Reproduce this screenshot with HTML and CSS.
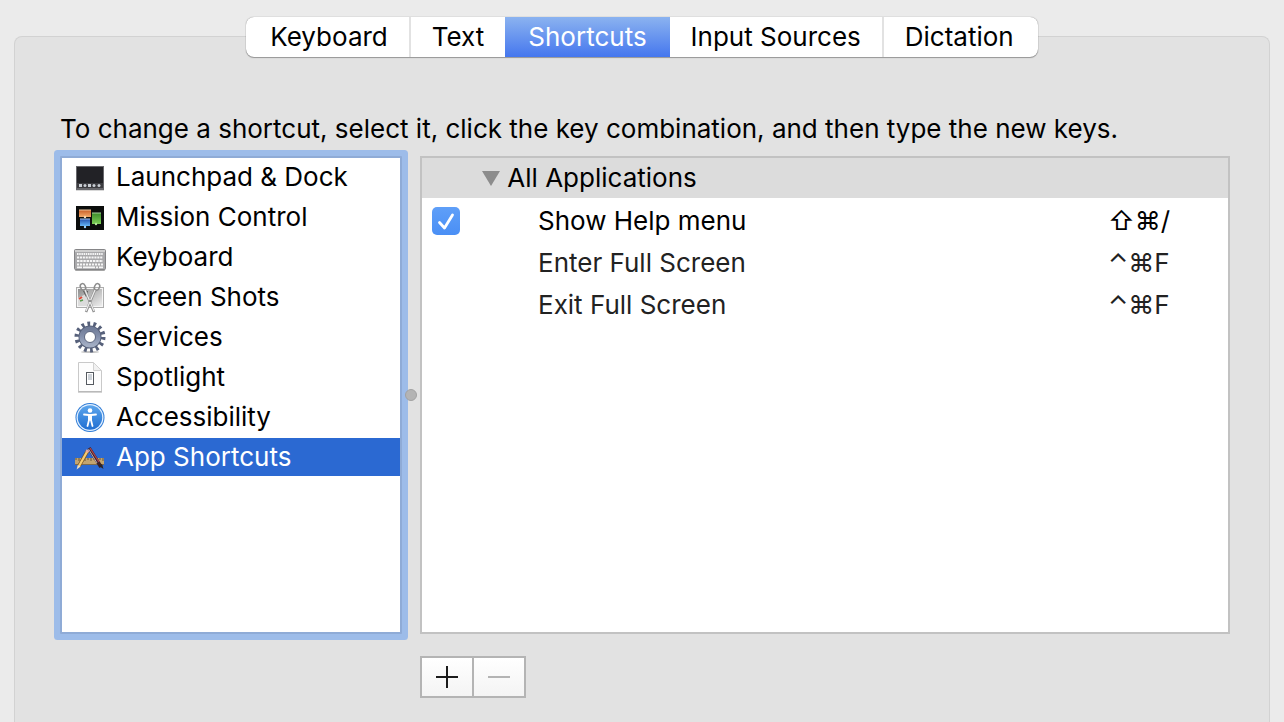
FILE: index.html
```html
<!DOCTYPE html>
<html lang="en">
<head>
    <meta charset="UTF-8">
    <meta name="viewport" content="width=device-width, initial-scale=1.0">
    <title>Keyboard</title>
    <link rel="stylesheet" href="styles.css">
</head>
<body>
    <!-- Tabs -->
    <div class="tabs" role="tablist">
        <button class="tab" role="tab">Keyboard</button>
        <button class="tab" role="tab">Text</button>
        <button class="tab active" role="tab" aria-selected="true">Shortcuts</button>
        <button class="tab" role="tab">Input Sources</button>
        <button class="tab" role="tab">Dictation</button>
    </div>

    <main class="panel">
        <p class="hint">To change a shortcut, select it, click the key combination, and then type the new keys.</p>

        <div class="panes">
            <!-- Categories -->
            <ul class="categories">
                <li><button class="category">
                    <svg class="icon" viewBox="0 0 32 32" aria-hidden="true">
                        <rect x="2" y="28" width="28" height="2" fill="#d8d8d8"/>
                        <rect x="2" y="5" width="28" height="24" fill="#68686c"/>
                        <rect x="3" y="6" width="26" height="17" fill="#222226"/>
                        <rect x="3" y="22" width="26" height="5" fill="#3c3c40"/>
                        <g fill="#c9ced4">
                            <rect x="5" y="23" width="3" height="3"/>
                            <circle cx="11" cy="24.500" r="1.500"/>
                            <rect x="14" y="23" width="3" height="3"/>
                            <circle cx="20" cy="24.500" r="1.500"/>
                            <circle cx="25" cy="24.500" r="1.500"/>
                        </g>
                    </svg>
                    Launchpad &amp; Dock
                </button></li>
                <li><button class="category">
                    <svg class="icon" viewBox="0 0 32 32" aria-hidden="true">
                        <defs>
                            <linearGradient id="mcOrange" x2="0" y2="1"><stop stop-color="#c85e28"/><stop offset="1" stop-color="#f3aa6a"/></linearGradient>
                            <linearGradient id="mcBlue" x2="0" y2="1"><stop stop-color="#2450a8"/><stop offset="1" stop-color="#64b4f4"/></linearGradient>
                            <linearGradient id="mcGreen" x2="0" y2="1"><stop stop-color="#3b8a2b"/><stop offset="1" stop-color="#7ed057"/></linearGradient>
                        </defs>
                        <rect x="2" y="5" width="28" height="24" fill="#0b0d0c"/>
                        <rect x="5" y="9" width="12" height="7" fill="url(#mcOrange)"/>
                        <path d="M5 9h12" stroke="#efc8a0"/>
                        <rect x="6" y="18" width="10" height="7" fill="url(#mcBlue)"/>
                        <path d="M6 18h10" stroke="#a8c4ec"/>
                        <rect x="18" y="12" width="9" height="11" fill="url(#mcGreen)"/>
                        <path d="M18 12h9" stroke="#a8d89c"/>
                        <circle cx="11" cy="16" r="1.200" fill="#f7d9b4"/>
                        <circle cx="11" cy="26" r="1.200" fill="#9bd0fa"/>
                        <circle cx="22" cy="23" r="1.200" fill="#b5e89a"/>
                    </svg>
                    Mission Control
                </button></li>
                <li><button class="category">
                    <svg class="icon" viewBox="0 0 32 32" aria-hidden="true">
                        <rect x="1" y="28" width="30" height="2" rx="1" fill="#a4a4a4"/>
                        <rect x="0.500" y="8.500" width="31" height="20" rx="1" fill="#a9a9ab" stroke="#858587"/>
                        <path d="M1 10h30" stroke="#cfcfcf" stroke-width="2"/>
                        <g stroke="#f6f6f6" stroke-width="2.200">
                            <path d="M3 13h26" stroke-dasharray="1.500 0.700"/>
                            <path d="M3 16.500h26" stroke-dasharray="2.100 0.800"/>
                            <path d="M3 20h26" stroke-dasharray="2.400 0.800"/>
                            <path d="M3 23.500h26" stroke-dasharray="2.100 0.900"/>
                            <path d="M3 26.400h5M9 26.400h12M22 26.400h2M25 26.400h4" stroke-width="1.600"/>
                        </g>
                    </svg>
                    Keyboard
                </button></li>
                <li><button class="category">
                    <svg class="icon" viewBox="0 0 32 32" aria-hidden="true">
                        <defs>
                            <linearGradient id="shotBg" x2="1" y2="1"><stop stop-color="#8f8f8f"/><stop offset="1" stop-color="#eeeeee"/></linearGradient>
                        </defs>
                        <rect x="2.500" y="6.500" width="27" height="20" fill="#f6f6f6" stroke="#adadad"/>
                        <rect x="4" y="8" width="24" height="17" fill="url(#shotBg)"/>
                        <path d="M4 17l8-4 4 12H4z" fill="#dcdcdc"/>
                        <path d="M5 18l3-2" stroke="#df4a36" stroke-width="2"/>
                        <path d="M6 20l3-1" stroke="#5a9d50" stroke-width="1.500"/>
                        <path d="M9 10h5l-2 6z" fill="#555"/>
                        <g fill="none" stroke="#8c8c8c" stroke-width="2.500">
                            <path d="M11 9L20 31M21 9L12 31"/>
                            <ellipse cx="9" cy="6" rx="2.500" ry="3.500" transform="rotate(-25 9 6)" stroke-width="1.500"/>
                            <ellipse cx="23" cy="6" rx="2.500" ry="3.500" transform="rotate(25 23 6)" stroke-width="1.500"/>
                        </g>
                        <path d="M11 9l9 21M21 9L12 30" stroke="#ececec" stroke-width="1.300"/>
                        <circle cx="16" cy="20" r="1" fill="#777"/>
                    </svg>
                    Screen Shots
                </button></li>
                <li><button class="category">
                    <svg class="icon" viewBox="0 0 32 32" aria-hidden="true">
                        <defs>
                            <linearGradient id="gear" x2="0" y2="1"><stop stop-color="#707c98"/><stop offset="0.500" stop-color="#8591ad"/><stop offset="1" stop-color="#a3aec4"/></linearGradient>
                        </defs>
                        <ellipse cx="16" cy="31" rx="9" ry="1" fill="#c4c4c4"/>
                        <circle cx="16" cy="16" r="13" fill="none" stroke="#56607a" stroke-width="5" stroke-dasharray="2.700 3.134"/>
                        <circle cx="16" cy="16" r="8.500" fill="none" stroke="#56607a" stroke-width="6"/>
                        <circle cx="16" cy="16" r="8.100" fill="none" stroke="url(#gear)" stroke-width="5"/>
                        <circle cx="16" cy="16" r="5.500" fill="#fff" stroke="#5c6680"/>
                    </svg>
                    Services
                </button></li>
                <li><button class="category">
                    <svg class="icon" viewBox="0 0 32 32" aria-hidden="true">
                        <path d="M4.500 1.500h15l8 8v21h-23z" fill="#fdfdfd" stroke="#c9c9c9"/>
                        <path d="M19.500 1.500v8h8z" fill="#f1f1f1" stroke="#d2d2d2"/>
                        <path d="M4 31h24" stroke="#a9a9a9"/>
                        <rect x="12.500" y="11.500" width="7" height="12" fill="#fff" stroke="#555a60"/>
                        <rect x="14" y="13" width="4" height="6" fill="#cdd2d8"/>
                    </svg>
                    Spotlight
                </button></li>
                <li><button class="category">
                    <svg class="icon" viewBox="0 0 32 32" aria-hidden="true">
                        <defs>
                            <linearGradient id="access" x2="0" y2="1"><stop stop-color="#5ca5ec"/><stop offset="1" stop-color="#1f6fd2"/></linearGradient>
                        </defs>
                        <circle cx="16" cy="16.500" r="14.500" fill="#2f7cd6"/>
                        <circle cx="16" cy="16.500" r="13.500" fill="#e4f1ff"/>
                        <circle cx="16" cy="16.500" r="12.200" fill="url(#access)"/>
                        <circle cx="16" cy="9.500" r="2.300" fill="#fff"/>
                        <path d="M10 13.500l5 .500v5L13.500 25M22 13.500l-5 .500v5L18.500 25" fill="none" stroke="#fff" stroke-width="1.800" stroke-linecap="round" stroke-linejoin="round"/>
                        <path d="M14 13h4v6.500h-4z" fill="#fff"/>
                    </svg>
                    Accessibility
                </button></li>
                <li><button class="category selected">
                    <svg class="icon" viewBox="0 0 32 32" aria-hidden="true">
                        <rect x="1" y="17" width="29" height="6" fill="#c2a470"/>
                        <path d="M1 23.500h29" stroke="#7d6a4c"/>
                        <path d="M2 17v2M5 17v3M8 17v2M11 17v3M14 17v2M17 17v3M20 17v2M23 17v3M26 17v2M29 17v3" stroke="#6a5836"/>
                        <path d="M15 7L27 26" stroke="#3b2229" stroke-width="3.600"/>
                        <path d="M16 7L25 21" stroke="#b2444c" stroke-width="1.300"/>
                        <path d="M14.500 8L23 22" stroke="#d9cbd1" stroke-width="0.800"/>
                        <path d="M13.500 10L5 25" stroke="#7a5524" stroke-width="3.600"/>
                        <path d="M13.500 10L5 25" stroke="#f6cd72" stroke-width="2.300"/>
                        <path d="M14 9l-1.300 2.300" stroke="#e8a79c" stroke-width="3"/>
                        <path d="M3.800 24l2.800 1.600-4 3z" fill="#f2dfba"/>
                        <path d="M25 25l3-2 1.500 5z" fill="#2c2426"/>
                    </svg>
                    App Shortcuts
                </button></li>
            </ul>

            <div class="splitter"><span class="grip"></span></div>

            <!-- Shortcuts -->
            <div class="shortcuts">
                <table class="shortcut-table">
                    <colgroup>
                        <col class="col-check">
                        <col>
                        <col class="col-keys">
                    </colgroup>
                    <thead>
                        <tr>
                            <th class="group" colspan="3" scope="colgroup">
                                <svg class="arrow" viewBox="0 0 18 16" aria-hidden="true"><path d="M0 0h18L9 15z" fill="#8c8c8c"/></svg>
                                All Applications
                            </th>
                        </tr>
                    </thead>
                    <tbody>
                        <tr class="enabled">
                            <td class="check-cell">
                                <span class="check">
                                    <input type="checkbox" id="helpMenu" checked>
                                    <svg class="tick" viewBox="0 0 28 28" aria-hidden="true"><path d="M7.500 15.500l5 5.500L20.500 8" fill="none" stroke="#fff" stroke-width="2.800" stroke-linecap="round" stroke-linejoin="round"/></svg>
                                </span>
                            </td>
                            <td><label for="helpMenu">Show Help menu</label></td>
                            <td>⇧⌘/</td>
                        </tr>
                        <tr>
                            <td class="check-cell"></td>
                            <td>Enter Full Screen</td>
                            <td>⌃⌘F</td>
                        </tr>
                        <tr>
                            <td class="check-cell"></td>
                            <td>Exit Full Screen</td>
                            <td>⌃⌘F</td>
                        </tr>
                    </tbody>
                </table>
            </div>

            <!-- Add / remove -->
            <div class="actions">
                <button class="action" aria-label="Add">
                    <svg viewBox="0 0 22 22" aria-hidden="true"><path d="M0 11h22M11 0v22" stroke="#1c1c1c" stroke-width="2"/></svg>
                </button>
                <button class="action" aria-label="Remove" disabled>
                    <svg viewBox="0 0 22 22" aria-hidden="true"><path d="M0 11h22" stroke="#b4b4b4" stroke-width="2"/></svg>
                </button>
            </div>
        </div>
    </main>
</body>
</html>
```
FILE: styles.css
```css
* {
    box-sizing: border-box;
}

body {
    margin: 0;
    min-height: 100vh;
    padding-top: 17px;
    display: flex;
    flex-direction: column;
    background-color: #ebebeb;
    color: #000;
    font-family: Inter, "DejaVu Sans", sans-serif;
    font-size: 26px;
    line-height: 30px;
}

button {
    font: inherit;
    color: inherit;
    border: none;
    padding: 0;
}

/* Tabs */
.tabs {
    position: relative;
    z-index: 1;
    align-self: center;
    display: flex;
    height: 40px;
    background-color: #fff;
    border-radius: 8px;
    box-shadow: 0 0 1px rgba(0, 0, 0, 0.5), 0 1px 1px rgba(0, 0, 0, 0.3);
}

.tab {
    padding: 0 21px;
    background: none;
    border-right: 2px solid #e2e2e2;
    white-space: nowrap;
}

.tab:first-child {
    padding-left: 24px;
}

.tab:last-child {
    padding-right: 24px;
}

.tab:last-child,
.tab:has(+ .active) {
    border-right: none;
}

.tab.active {
    padding: 0 23px;
    color: #fff;
    border-right: none;
    background: linear-gradient(#8bb3f0, #4577ee);
}

/* Panel behind the tabs */
.panel {
    flex: 1;
    display: flex;
    flex-direction: column;
    margin: -21px 14px 0;
    padding: 77px 39px 24px 45px;
    background-color: #e2e2e2;
    border: 1px solid #d2d2d2;
    border-bottom: none;
    border-radius: 8px 8px 0 0;
}

.hint {
    margin: 0 0 12px;
}

.panes {
    flex: 1;
    display: grid;
    grid-template-columns: 342px 18px 1fr;
    grid-template-rows: 1fr auto;
    row-gap: 22px;
}

/* Categories */
.categories {
    margin: 0;
    padding: 0;
    list-style: none;
    display: flex;
    flex-direction: column;
    gap: 2px;
    background-color: #fff;
    border: 2px solid #8fabd6;
    box-shadow: 0 0 0 6px #9dbce9;
    border-radius: 1px;
}

.category {
    width: 100%;
    height: 38px;
    padding-left: 12px;
    display: flex;
    align-items: center;
    gap: 10px;
    background: none;
    text-align: left;
}

.category.selected {
    background-color: #2b69d2;
    color: #fff;
}

.icon {
    width: 32px;
    height: 32px;
}

.splitter {
    display: flex;
    align-items: center;
    justify-content: center;
}

.grip {
    width: 12px;
    height: 12px;
    border: 1px solid #a2a2a2;
    border-radius: 50%;
    background-color: #b4b4b4;
}

/* Shortcuts */
.shortcuts {
    background-color: #fff;
    border: 2px solid #c2c2c2;
}

.shortcut-table {
    width: 100%;
    border-collapse: separate;
    border-spacing: 0;
    table-layout: fixed;
}

.col-check {
    width: 116px;
}

.col-keys {
    width: 120px;
}

.shortcut-table td {
    height: 42px;
    padding: 0;
    color: #222;
}

.shortcut-table .enabled td {
    color: #000;
}

.shortcut-table .group {
    height: 42px;
    padding: 0 0 0 60px;
    background-color: #dcdcdc;
    border-bottom: 2px solid #fff;
    font-weight: normal;
    text-align: left;
}

.arrow {
    width: 18px;
    height: 16px;
}

.shortcut-table .check-cell {
    padding-left: 10px;
}

.check {
    display: grid;
    width: 28px;
    height: 28px;
}

.check input,
.tick {
    grid-area: 1 / 1;
    width: 28px;
    height: 28px;
    margin: 0;
}

.check input {
    appearance: none;
    border-radius: 5px;
    background-color: #bbb;
}

.check input:checked {
    background: linear-gradient(#5f9ff8, #4a8ff5);
}

.tick {
    pointer-events: none;
}

/* Add / remove */
.actions {
    grid-column: 3;
    justify-self: start;
    display: flex;
    border: 2px solid #b4b4b4;
}

.action {
    display: flex;
    align-items: center;
    justify-content: center;
    width: 50px;
    height: 38px;
    background: linear-gradient(#fff, #f4f4f4);
}

.action + .action {
    width: 52px;
    border-left: 2px solid #b4b4b4;
}

.action svg {
    width: 22px;
    height: 22px;
}
```
